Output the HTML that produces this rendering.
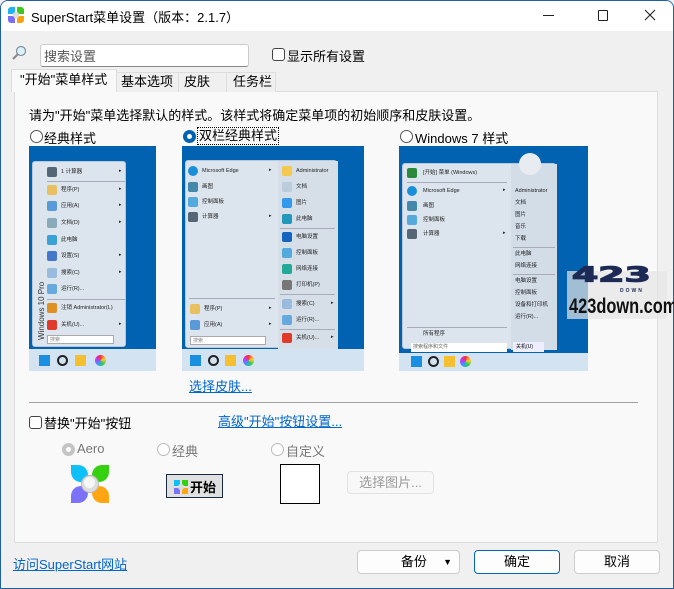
<!DOCTYPE html>
<html><head><meta charset="utf-8"><style>
*{box-sizing:border-box;margin:0;padding:0}
body{width:674px;height:589px;overflow:hidden;background:#f0f0f0;font-family:"Liberation Sans","Noto Sans CJK SC",sans-serif;font-size:13px;color:#000;position:relative}
.a{position:absolute}
.win{position:absolute;left:0;top:0;width:674px;height:589px;border:1px solid #1e5fa8;border-radius:8px 8px 0 0}
.cb{position:absolute;width:13px;height:13px;border:1px solid #444;border-radius:3px;background:#fff}
.rd{position:absolute;width:13px;height:13px;border:1px solid #555;border-radius:50%;background:#fff}
.lnk{color:#0066cc;text-decoration:underline;position:absolute}
.btn{position:absolute;height:24px;border:1px solid #ccc;border-radius:4px;background:#fdfdfd;text-align:center;line-height:22px}
.pv{position:absolute;background:#0062b0;overflow:hidden}
.tb{position:absolute;left:0;right:0;bottom:0;height:22px;background:#d3e3f2}
.mn{position:absolute;background:#dce5ee;border:1px solid #b8c8d8;border-radius:3px}
.it{position:absolute;font-size:5.5px;color:#222;white-space:nowrap;line-height:7px}
.ic{position:absolute;width:10px;height:10px;border-radius:2px}
.sep{position:absolute;height:1px;background:#aab}
.ar{position:absolute;font-size:5px;color:#222}
.tbi{position:absolute;bottom:5px;width:11px;height:11px}
.pt{position:absolute}
</style></head><body>
<div class="win"></div>
<div class="a" style="left:1px;top:1px;width:672px;height:30px;background:#fff;border-radius:7px 7px 0 0"></div>
<!-- title icon -->
<div class="a" style="left:8px;top:7px;width:16px;height:16px">
 <div class="pt" style="left:0;top:0;width:7px;height:7px;background:#1fb2ee;border-radius:3px 0 3px 0"></div>
 <div class="pt" style="left:9px;top:0;width:7px;height:7px;background:#3cc81e;border-radius:0 3px 0 3px"></div>
 <div class="pt" style="left:0;top:9px;width:7px;height:7px;background:#7a6cf5;border-radius:0 3px 0 3px"></div>
 <div class="pt" style="left:9px;top:9px;width:7px;height:7px;background:#ffa20e;border-radius:3px 0 3px 0"></div>
 <div class="pt" style="left:5px;top:5px;width:6px;height:6px;background:#ddd;border-radius:50%"></div>
</div>
<div class="a" style="left:31px;top:7px;font-size:13px">SuperStart菜单设置（版本：2.1.7）</div>
<div class="a" style="left:543px;top:15px;width:11px;height:1px;background:#222"></div>
<div class="a" style="left:598px;top:10px;width:10px;height:11px;border:1px solid #222;border-radius:1px"></div>
<svg class="a" style="left:644px;top:9px" width="12" height="12"><path d="M1 1L11 11M11 1L1 11" stroke="#222" stroke-width="1.1"/></svg>

<!-- search -->
<svg class="a" style="left:11px;top:45px" width="16" height="16"><circle cx="10" cy="6" r="4.5" fill="#dff0fa" stroke="#7a8fa0" stroke-width="1.2"/><path d="M7 9L2 14" stroke="#8a8a8a" stroke-width="2.2"/></svg>
<div class="a" style="left:40px;top:44px;width:209px;height:23px;background:#fff;border:1px solid #ccc;border-bottom-color:#888;border-radius:3px"></div>
<div class="a" style="left:44px;top:46px;color:#555">搜索设置</div>
<div class="cb" style="left:272px;top:48px"></div>
<div class="a" style="left:287px;top:46px">显示所有设置</div>

<!-- tabs -->
<div class="a" style="left:14px;top:91px;width:644px;height:452px;background:#f9f9f9;border:1px solid #ddd"></div>
<div class="a" style="left:116px;top:72px;width:63px;height:20px;border:1px solid #ddd;border-bottom:none;background:#f0f0f0;padding-left:4px;line-height:18px">基本选项</div>
<div class="a" style="left:178px;top:72px;width:49px;height:20px;border:1px solid #ddd;border-bottom:none;background:#f0f0f0;padding-left:5px;line-height:18px">皮肤</div>
<div class="a" style="left:226px;top:72px;width:50px;height:20px;border:1px solid #ddd;border-bottom:none;background:#f0f0f0;padding-left:6px;line-height:18px">任务栏</div>
<div class="a" style="left:11px;top:69px;width:106px;height:23px;border:1px solid #ddd;border-bottom:none;background:#f9f9f9;padding-left:8px;line-height:20px">"开始"菜单样式</div>

<div class="a" style="left:29px;top:105px">请为"开始"菜单选择默认的样式。该样式将确定菜单项的初始顺序和皮肤设置。</div>

<div class="rd" style="left:30px;top:130px"></div><div class="a" style="left:44px;top:128px">经典样式</div>
<div class="a" style="left:183px;top:130px;width:13px;height:13px;border-radius:50%;background:#0063b1"></div><div class="a" style="left:187px;top:134px;width:5px;height:5px;border-radius:50%;background:#fff"></div>
<div class="a" style="left:197px;top:127px;border:1px dotted #000;padding:0 1px;line-height:16px">双栏经典样式</div>
<div class="rd" style="left:400px;top:130px"></div><div class="a" style="left:415px;top:128px">Windows 7 样式</div>

<!-- preview 1 -->
<div class="pv" style="left:29px;top:146px;width:127px;height:225px">
 <div class="mn" style="left:3px;top:15px;width:94px;height:186px">
  <div class="a" style="left:4px;transform:rotate(-90deg);transform-origin:left top;font-size:8px;color:#333;white-space:nowrap;top:178px">Windows 10 Pro</div>
  <div class="ic" style="left:14px;top:5px;background:#567"></div><div class="it" style="left:28px;top:7px">1 计算器</div><div class="ar" style="left:86px;top:6px">▸</div>
  <div class="sep" style="left:14px;top:19px;width:78px"></div>
  <div class="ic" style="left:14px;top:23px;background:#e8c060"></div><div class="it" style="left:28px;top:25px">程序(P)</div><div class="ar" style="left:86px;top:24px">▸</div>
  <div class="ic" style="left:14px;top:39px;background:#5a9ad8"></div><div class="it" style="left:28px;top:41px">应用(A)</div><div class="ar" style="left:86px;top:40px">▸</div>
  <div class="ic" style="left:14px;top:56px;background:#8ab"></div><div class="it" style="left:28px;top:58px">文档(D)</div><div class="ar" style="left:86px;top:57px">▸</div>
  <div class="ic" style="left:14px;top:73px;background:#3aa0d8"></div><div class="it" style="left:28px;top:75px">此电脑</div>
  <div class="ic" style="left:14px;top:89px;background:#47c"></div><div class="it" style="left:28px;top:91px">设置(S)</div><div class="ar" style="left:86px;top:90px">▸</div>
  <div class="ic" style="left:14px;top:106px;background:#9bd"></div><div class="it" style="left:28px;top:108px">搜索(C)</div><div class="ar" style="left:86px;top:107px">▸</div>
  <div class="ic" style="left:14px;top:122px;background:#6ad"></div><div class="it" style="left:28px;top:124px">运行(R)...</div>
  <div class="sep" style="left:14px;top:137px;width:78px"></div>
  <div class="ic" style="left:14px;top:141px;background:#e09020"></div><div class="it" style="left:28px;top:143px">注销 Administrator(L)</div>
  <div class="ic" style="left:14px;top:158px;background:#e03a2a"></div><div class="it" style="left:28px;top:160px">关机(U)...</div><div class="ar" style="left:86px;top:159px">▸</div>
  <div class="a" style="left:14px;top:173px;width:67px;height:9px;background:#fff;border:1px solid #aaa;font-size:5px;color:#888;padding-left:2px">搜索</div>
 </div>
 <div class="tb"><div class="tbi" style="left:10px;background:#1a8fe0"></div><div class="tbi" style="left:28px;border:2px solid #222;border-radius:50%"></div><div class="tbi" style="left:46px;background:#f5c030"></div><div class="tbi" style="left:66px;background:conic-gradient(#e33,#fc3,#3c5,#39f,#c3f,#e33);border-radius:50%"></div></div>
</div>

<!-- preview 2 -->
<div class="pv" style="left:182px;top:146px;width:182px;height:225px">
 <div class="mn" style="left:3px;top:14px;width:152px;height:188px">
  <div class="ic" style="left:2px;top:5px;background:#1a8fd8;border-radius:50%"></div><div class="it" style="left:16px;top:7px">Microsoft Edge</div><div class="ar" style="left:83px;top:6px">▸</div>
  <div class="ic" style="left:2px;top:21px;background:#48a"></div><div class="it" style="left:16px;top:23px">画图</div>
  <div class="ic" style="left:2px;top:36px;background:#5ad"></div><div class="it" style="left:16px;top:38px">控制面板</div>
  <div class="ic" style="left:2px;top:51px;background:#567"></div><div class="it" style="left:16px;top:53px">计算器</div><div class="ar" style="left:83px;top:52px">▸</div>
  <div class="a" style="left:92px;top:0;width:60px;height:188px;background:#d6dfe8"></div>
  <div class="ic" style="left:96px;top:5px;background:#f5c850"></div><div class="it" style="left:110px;top:7px">Administrator</div>
  <div class="ic" style="left:96px;top:21px;background:#bcd"></div><div class="it" style="left:110px;top:23px">文档</div>
  <div class="ic" style="left:96px;top:37px;background:#39e"></div><div class="it" style="left:110px;top:39px">图片</div>
  <div class="ic" style="left:96px;top:53px;background:#29b"></div><div class="it" style="left:110px;top:55px">此电脑</div>
  <div class="sep" style="left:94px;top:67px;width:55px"></div>
  <div class="ic" style="left:96px;top:71px;background:#1565c0"></div><div class="it" style="left:110px;top:73px">电脑设置</div>
  <div class="ic" style="left:96px;top:87px;background:#5ad"></div><div class="it" style="left:110px;top:89px">控制面板</div>
  <div class="ic" style="left:96px;top:103px;background:#2a9"></div><div class="it" style="left:110px;top:105px">网络连接</div>
  <div class="ic" style="left:96px;top:119px;background:#777"></div><div class="it" style="left:110px;top:121px">打印机(P)</div>
  <div class="sep" style="left:94px;top:133px;width:55px"></div>
  <div class="ic" style="left:96px;top:138px;background:#9bd"></div><div class="it" style="left:110px;top:140px">搜索(C)</div><div class="ar" style="left:145px;top:139px">▸</div>
  <div class="ic" style="left:96px;top:154px;background:#6ad"></div><div class="it" style="left:110px;top:156px">运行(R)...</div>
  <div class="sep" style="left:94px;top:168px;width:55px"></div>
  <div class="ic" style="left:96px;top:172px;background:#e03a2a"></div><div class="it" style="left:110px;top:174px">关机(U)...</div><div class="ar" style="left:145px;top:173px">▸</div>
  <div class="sep" style="left:3px;top:137px;width:86px"></div>
  <div class="ic" style="left:4px;top:143px;background:#e8c060"></div><div class="it" style="left:18px;top:145px">程序(P)</div><div class="ar" style="left:83px;top:144px">▸</div>
  <div class="ic" style="left:4px;top:159px;background:#5a9ad8"></div><div class="it" style="left:18px;top:161px">应用(A)</div><div class="ar" style="left:83px;top:160px">▸</div>
  <div class="a" style="left:4px;top:175px;width:76px;height:9px;background:#fff;border:1px solid #aaa;font-size:5px;color:#888;padding-left:2px">搜索</div>
 </div>
 <div class="tb"><div class="tbi" style="left:8px;background:#1a8fe0"></div><div class="tbi" style="left:26px;border:2px solid #222;border-radius:50%"></div><div class="tbi" style="left:43px;background:#f5c030"></div><div class="tbi" style="left:61px;background:conic-gradient(#e33,#fc3,#3c5,#39f,#c3f,#e33);border-radius:50%"></div></div>
</div>

<!-- preview 3 -->
<div class="pv" style="left:399px;top:146px;width:189px;height:225px">
 <div class="mn" style="left:3px;top:17px;width:154px;height:186px">
  <div class="ic" style="left:4px;top:4px;background:#2a8a3a"></div><div class="it" style="left:20px;top:6px">[开始] 菜单 (Windows)</div>
  <div class="sep" style="left:4px;top:18px;width:100px"></div>
  <div class="ic" style="left:4px;top:22px;background:#1a8fd8;border-radius:50%"></div><div class="it" style="left:20px;top:24px">Microsoft Edge</div><div class="ar" style="left:100px;top:23px">▸</div>
  <div class="ic" style="left:4px;top:37px;background:#48a"></div><div class="it" style="left:20px;top:39px">画图</div>
  <div class="ic" style="left:4px;top:51px;background:#5ad"></div><div class="it" style="left:20px;top:53px">控制面板</div>
  <div class="ic" style="left:4px;top:65px;background:#567"></div><div class="it" style="left:20px;top:67px">计算器</div><div class="ar" style="left:100px;top:66px">▸</div>
  <div class="sep" style="left:4px;top:163px;width:100px"></div>
  <div class="it" style="left:20px;top:167px">所有程序</div>
  <div class="a" style="left:8px;width:96px;height:9px;background:#fff;font-size:5px;color:#666;padding-left:2px;top:179px">搜索程序和文件</div>
  <div class="a" style="left:108px;top:0;width:46px;height:186px;background:#d3dde8"></div>
  <div class="it" style="left:112px;top:24px">Administrator</div>
  <div class="it" style="left:112px;top:36px">文档</div><div class="it" style="left:112px;top:48px">图片</div><div class="it" style="left:112px;top:60px">音乐</div><div class="it" style="left:112px;top:72px">下载</div>
  <div class="sep" style="left:110px;top:83px;width:42px"></div>
  <div class="it" style="left:112px;top:87px">此电脑</div><div class="it" style="left:112px;top:99px">网络连接</div>
  <div class="sep" style="left:110px;top:110px;width:42px"></div>
  <div class="it" style="left:112px;top:114px">电脑设置</div><div class="it" style="left:112px;top:126px">控制面板</div><div class="it" style="left:112px;top:138px">设备和打印机</div><div class="it" style="left:112px;top:150px">运行(R)...</div>
  <div class="a" style="left:110px;top:178px;width:31px;height:10px;background:#eef;font-size:5px;padding-left:3px;line-height:10px">关机(U)</div>
 </div>
 <div class="a" style="left:120px;top:7px;width:22px;height:22px;border-radius:50%;background:#e8ecf0"></div>
 <div class="tb" style="height:18px"><div class="tbi" style="left:12px;bottom:4px;background:#1a8fe0"></div><div class="tbi" style="left:29px;bottom:4px;border:2px solid #222;border-radius:50%"></div><div class="tbi" style="left:45px;bottom:4px;background:#f5c030"></div><div class="tbi" style="left:61px;bottom:4px;background:conic-gradient(#e33,#fc3,#3c5,#39f,#c3f,#e33);border-radius:50%"></div></div>
</div>
<!-- watermark -->
<div class="a" style="left:567px;top:271px;width:100px;height:48px;background:rgba(230,230,230,.7)"></div>
<div class="a" style="left:572px;top:263px;font:900 26px 'DejaVu Sans',sans-serif;color:#1c2a55;transform:scale(1.45,0.8);transform-origin:left top;-webkit-text-stroke:1.5px #1c2a55">423</div>
<div class="a" style="left:620px;top:288px;font:bold 5px 'Liberation Sans',sans-serif;color:#1c2a55;letter-spacing:2px">DOWN</div>
<div class="a" style="left:569px;top:295px;font:bold 21px 'Liberation Sans Narrow','Liberation Sans',sans-serif;color:#111;transform:scaleX(.78);transform-origin:left top">423down.com</div>

<a class="lnk" style="left:189px;top:376px">选择皮肤...</a>
<div class="a" style="left:29px;top:402px;width:609px;height:1px;background:#a0a0a0"></div>
<div class="cb" style="left:29px;top:416px"></div><div class="a" style="left:44px;top:413px">替换"开始"按钮</div>
<a class="lnk" style="left:218px;top:411px">高级"开始"按钮设置...</a>
<div class="a" style="left:62px;top:443px;width:13px;height:13px;border-radius:50%;background:#c4c4c4"></div><div class="a" style="left:66px;top:447px;width:5px;height:5px;border-radius:50%;background:#fff"></div>
<div class="a" style="left:77px;top:441px;color:#777">Aero</div>
<div class="rd" style="left:157px;top:443px;border-color:#bbb"></div><div class="a" style="left:172px;top:441px;color:#777">经典</div>
<div class="rd" style="left:271px;top:443px;border-color:#bbb"></div><div class="a" style="left:286px;top:441px;color:#777">自定义</div>
<!-- aero logo -->
<div class="a" style="left:71px;top:465px;width:38px;height:38px">
 <div class="pt" style="left:0;top:0;width:17px;height:17px;background:#0ec0f8;border-radius:0 0 0 0;border-top-right-radius:10px;border-bottom-left-radius:10px;clip-path:none"></div>
 <div class="pt" style="left:21px;top:0;width:17px;height:17px;background:#35d010;border-top-left-radius:10px;border-bottom-right-radius:10px"></div>
 <div class="pt" style="left:0;top:21px;width:17px;height:17px;background:#7c72f8;border-top-left-radius:10px;border-bottom-right-radius:10px"></div>
 <div class="pt" style="left:21px;top:21px;width:17px;height:17px;background:#ffa512;border-top-right-radius:10px;border-bottom-left-radius:10px"></div>
 <div class="pt" style="left:10px;top:10px;width:18px;height:18px;background:#ddd;border:1px solid #bbb;border-radius:50%"></div>
 <div class="pt" style="left:13px;top:12px;width:11px;height:11px;background:#f6f6f6;border-radius:50%"></div>
</div>
<div class="a" style="left:166px;top:474px;width:57px;height:24px;border:1px solid #1a2a40;background:#e0e0e0"></div>
<div class="a" style="left:174px;top:480px;width:14px;height:14px">
 <div class="pt" style="left:0;top:0;width:6px;height:6px;background:#0ec0f8"></div>
 <div class="pt" style="left:8px;top:0;width:6px;height:6px;background:#35d010"></div>
 <div class="pt" style="left:0;top:8px;width:6px;height:6px;background:#7c72f8"></div>
 <div class="pt" style="left:8px;top:8px;width:6px;height:6px;background:#ffa512"></div>
 <div class="pt" style="left:4px;top:4px;width:6px;height:6px;background:#ddd;border-radius:50%"></div>
</div>
<div class="a" style="left:190px;top:477px;font-weight:bold;font-size:13px">开始</div>
<div class="a" style="left:280px;top:464px;width:40px;height:40px;border:1px solid #000;background:#fff"></div>
<div class="btn" style="left:347px;top:471px;width:87px;height:23px;color:#999;background:#f8f8f8;border-color:#e2e2e2">选择图片...</div>

<a class="lnk" style="left:13px;top:554px">访问SuperStart网站</a>
<div class="btn" style="left:357px;top:550px;width:103px">&nbsp;&nbsp;&nbsp;备份<span class="a" style="right:7px;top:0;font-size:9px">▼</span></div>
<div class="btn" style="left:474px;top:550px;width:86px;border-color:#0067c0">确定</div>
<div class="btn" style="left:574px;top:550px;width:86px">取消</div>
</body></html>
